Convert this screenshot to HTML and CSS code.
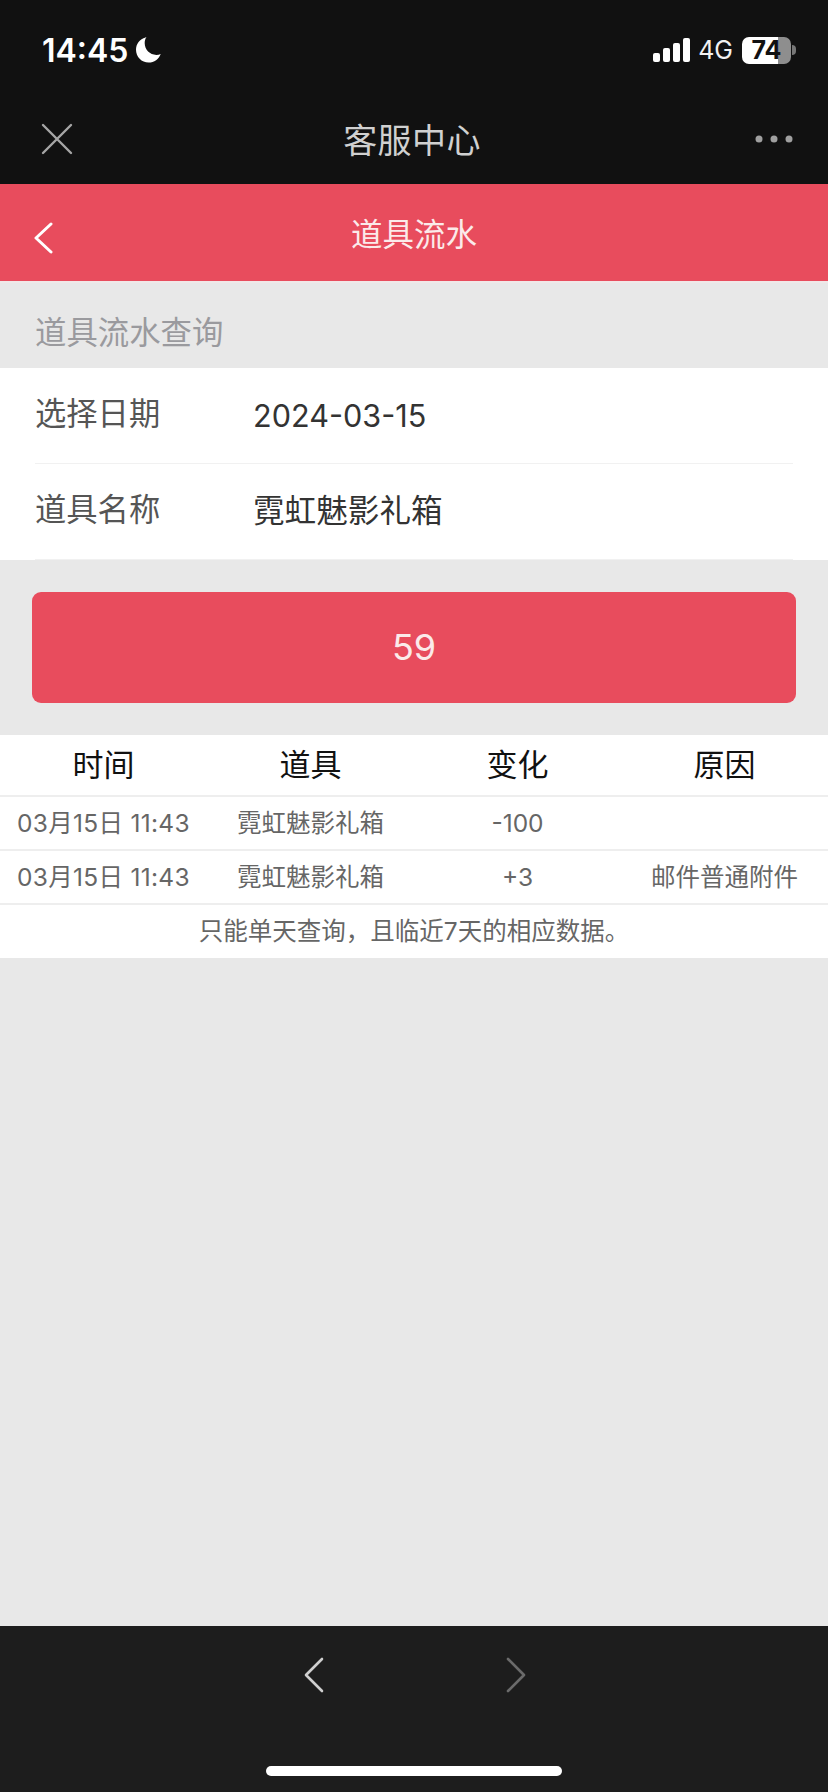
FILE: index.html
```html
<!DOCTYPE html>
<html lang="zh-CN">
<head>
<meta charset="utf-8">
<title>道具流水</title>
<link rel="stylesheet" href="styles.css">
</head>
<body>
<div class="page">
  <header class="chrome">
    <div class="status">
      <div class="status-left">
        <span class="clock">14:45</span>
        <svg class="moon" width="25" height="26" viewBox="0 0 25 26"><path d="M9.5 0.5C3.8 2 0 6.9 0 12.8 0 20 5.6 25.6 12.6 25.6c5.6 0 10.3-3.4 12.1-8.6-1.3 .6-2.8 .9-4.4 .9-6.4 0-11.6-5.2-11.6-11.6 0-2.1 .3-4 1.8-6.2z" fill="#fff"/></svg>
      </div>
      <div class="status-right">
        <svg class="signal" width="37" height="24" viewBox="0 0 37 24"><rect x="0" y="15" width="7" height="9" rx="2" fill="#fff"/><rect x="10" y="10" width="7" height="14" rx="2" fill="#fff"/><rect x="20" y="5" width="7" height="19" rx="2" fill="#fff"/><rect x="30" y="0" width="7" height="24" rx="2" fill="#fff"/></svg>
        <span class="net">4G</span>
        <div class="battery"><span class="battery-cell">74</span><span class="battery-tip"></span></div>
      </div>
    </div>
    <div class="wechat-nav">
      <svg class="nav-icon" width="32" height="32" viewBox="0 0 32 32"><path d="M2 2L30 30M30 2L2 30" stroke="#a6a6a6" stroke-width="2.4" stroke-linecap="round"/></svg>
      <h1 class="wechat-title">客服中心</h1>
      <svg class="nav-icon" width="38" height="10" viewBox="0 0 38 10"><circle cx="4" cy="5" r="3.5" fill="#a0a0a0"/><circle cx="19" cy="5" r="3.5" fill="#a0a0a0"/><circle cx="34" cy="5" r="3.5" fill="#a0a0a0"/></svg>
    </div>
  </header>

  <div class="app-bar">
    <svg class="back" width="20" height="32" viewBox="0 0 20 32"><path d="M18 2L3 16L18 30" fill="none" stroke="#fff" stroke-width="3" stroke-linecap="round" stroke-linejoin="round"/></svg>
    <h2 class="app-title">道具流水</h2>
  </div>

  <main class="content">
    <div class="section-label">道具流水查询</div>
    <section class="form">
      <div class="form-row"><span class="form-key">选择日期</span><span class="form-date">2024-03-15</span></div>
      <div class="form-row"><span class="form-key">道具名称</span><span class="form-value">霓虹魅影礼箱</span></div>
    </section>
    <div class="action"><button class="count-btn">59</button></div>
    <section class="table">
      <div class="row head"><span>时间</span><span>道具</span><span>变化</span><span>原因</span></div>
      <div class="row"><span class="stamp">03月15日 11:43</span><span>霓虹魅影礼箱</span><span class="delta">-100</span><span></span></div>
      <div class="row"><span class="stamp">03月15日 11:43</span><span>霓虹魅影礼箱</span><span class="delta">+3</span><span>邮件普通附件</span></div>
      <div class="note">只能单天查询，且临近7天的相应数据。</div>
    </section>
  </main>

  <footer class="toolbar">
    <div class="toolbar-arrows">
      <svg width="20" height="36" viewBox="0 0 20 36"><path d="M18 2L2 18L18 34" fill="none" stroke="#cfcfcf" stroke-width="2.6" stroke-linecap="round" stroke-linejoin="round"/></svg>
      <svg width="20" height="36" viewBox="0 0 20 36"><path d="M2 2L18 18L2 34" fill="none" stroke="#6b6b6b" stroke-width="2.6" stroke-linecap="round" stroke-linejoin="round"/></svg>
    </div>
    <div class="home-bar"></div>
  </footer>
</div>
</body>
</html>
```

FILE: styles.css
```css
* { box-sizing: border-box; }
html, body { margin: 0; padding: 0; }
body {
  width: 828px;
  height: 1792px;
  overflow: hidden;
  background: #e8e8e8;
  font-family: Inter, "Noto Sans CJK SC", sans-serif;
}
h1, h2 { margin: 0; font-weight: 400; }
.page { display: flex; flex-direction: column; height: 1792px; }

.chrome { height: 184px; background: #111; flex: none; }
.status {
  height: 100px;
  padding: 0 32px 0 42px;
  display: flex;
  align-items: center;
  justify-content: space-between;
}
.status-left { display: flex; align-items: center; gap: 8px; }
.clock { font-size: 32px; font-weight: 600; color: #fff; }
.moon { display: block; }
.status-right { display: flex; align-items: center; gap: 8px; }
.signal { display: block; }
.net { font-size: 25px; color: #f2f2f2; font-weight: 400; }
.battery { display: flex; align-items: center; margin-left: 1px; }
.battery-cell {
  width: 49px;
  height: 27px;
  border-radius: 7px;
  background: linear-gradient(90deg, #fff 0, #fff 36px, #8e8e8e 36px, #8e8e8e 100%);
  color: #111;
  font-size: 25px;
  font-weight: 700;
  line-height: 27px;
  text-align: center;
}
.battery-tip { width: 4px; height: 10px; background: #777; border-radius: 0 4px 4px 0; margin-left: 1px; }

.wechat-nav {
  height: 84px;
  padding: 0 35px 6px 41px;
  display: flex;
  align-items: center;
  justify-content: space-between;
  position: relative;
}
.nav-icon { display: block; }
.wechat-title {
  font-size: 34px;
  color: #d0d0d0;
  position: absolute;
  left: 0;
  right: 4px;
  top: 0;
  bottom: 8px;
  display: flex;
  align-items: center;
  justify-content: center;
  letter-spacing: .4px;
}

.app-bar {
  height: 97px;
  flex: none;
  background: #e84c5d;
  display: flex;
  align-items: center;
  padding-left: 33px;
  position: relative;
}
.back { display: block; margin-top: 11px; }
.app-title {
  position: absolute;
  inset: 0 0 2px 0;
  display: flex;
  align-items: center;
  justify-content: center;
  font-size: 31.5px;
  color: #fbeaea;
}

.content { flex: 1; border-top: 2px solid #f0e8e8; }
.section-label {
  height: 85px;
  padding: 28px 0 0 35px;
  font-size: 31.4px;
  line-height: 44px;
  color: #9a9a9e;
}
.form { background: #fff; height: 192px; }
.form-row {
  height: 96px;
  margin: 0 35px;
  padding-bottom: 8px;
  border-bottom: 1px solid #f1f1f1;
  display: flex;
  align-items: center;
}
.form-key { width: 218px; font-size: 31.3px; color: #555; }
.form-value { font-size: 31.6px; color: #333; }
.form-date { font-size: 30.6px; color: #333; margin-top: 7px; }

.action { padding: 32px; }
.count-btn {
  display: block;
  width: 100%;
  height: 111px;
  border: 0;
  border-radius: 9px;
  background: #e84c5d;
  color: #fbeaea;
  font: inherit;
  font-size: 36px;
  padding-bottom: 3px;
}

.table { background: #fff; }
.row {
  display: grid;
  grid-template-columns: repeat(4, 207px);
  height: 54px;
  padding-bottom: 4px;
  align-items: center;
  justify-items: center;
  border-bottom: 2px solid #eee;
  font-size: 24.5px;
  color: #666;
  white-space: nowrap;
}
.row.head { height: 62px; padding-bottom: 6px; font-size: 31px; color: #111; }
.stamp { letter-spacing: .3px; }
.delta { margin-top: 4px; }
.note {
  height: 53px;
  padding-bottom: 4px;
  font-size: 24.5px;
  color: #666;
  display: flex;
  align-items: center;
  justify-content: center;
}

.toolbar {
  height: 166px;
  flex: none;
  background: #1d1d1d;
  padding-top: 31px;
  display: flex;
  flex-direction: column;
  align-items: center;
}
.toolbar-arrows { display: flex; gap: 182px; margin-left: 2px; }
.toolbar-arrows svg { display: block; }
.home-bar { width: 296px; height: 10px; margin-top: 73px; background: #fff; border-radius: 5px; }
```
